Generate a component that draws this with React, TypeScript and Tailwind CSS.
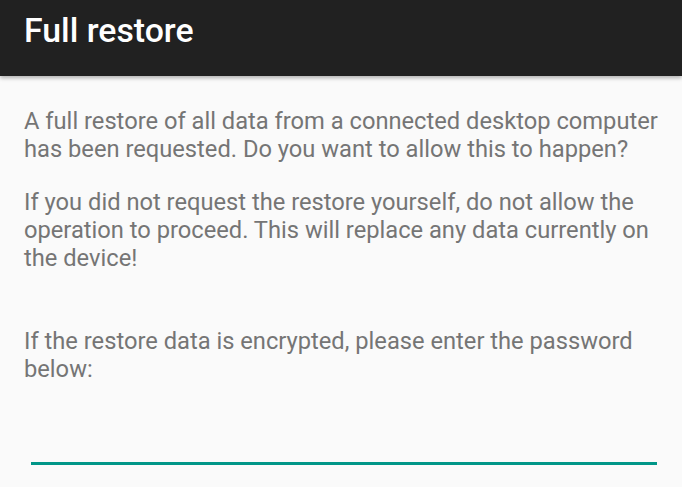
export default function App() {
  return (
    <div className="w-[682px] h-[487px] bg-[#fafafa] overflow-hidden flex flex-col" style={{ fontFamily: 'Roboto, "Noto Sans", sans-serif' }}>
      <div className="h-[76px] bg-[#212121] shadow-[0_2px_4px_rgba(0,0,0,0.3)] flex items-center px-6 relative z-10">
        <h1 className="text-[33.8px] font-medium text-white leading-none -mt-[14px]">Full restore</h1>
      </div>
      <div className="pl-6 pr-[14px] pt-[31px] text-[23.7px] leading-[28px] text-[#757575]">
        <p>A full restore of all data from a connected desktop computer has been requested. Do you want to allow this to happen?</p>
        <p className="mt-[25px]">If you did not request the restore yourself, do not allow the operation to proceed. This will replace any data currently on the device!</p>
        <p className="mt-[55px]">If the restore data is encrypted, please enter the password below:</p>
        <div className="mt-[79px] ml-[7px] mr-[11px] h-[3px] bg-[#009688]" />
      </div>
    </div>
  );
}
